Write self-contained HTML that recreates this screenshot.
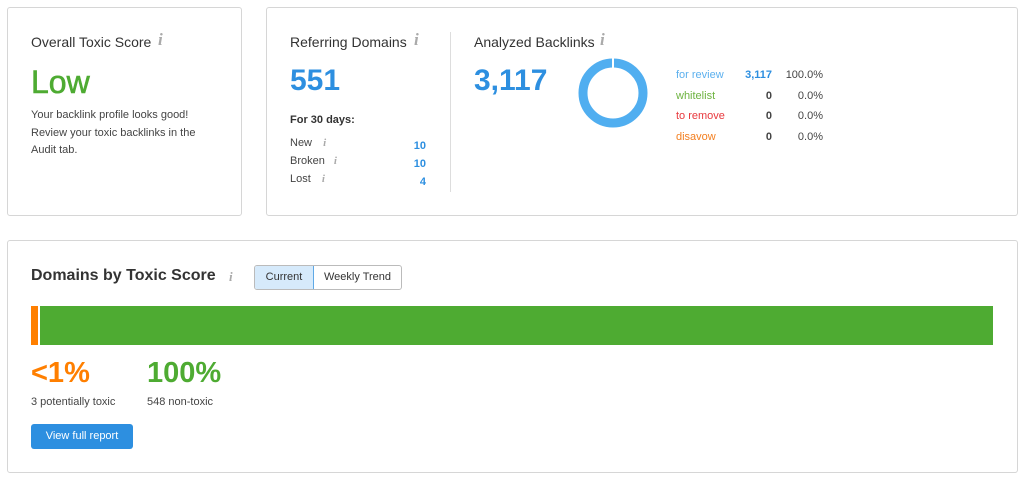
<!DOCTYPE html>
<html><head><meta charset="utf-8"><style>
*{margin:0;padding:0;box-sizing:border-box}
body{width:1024px;height:480px;background:#fff;font-family:"Liberation Sans",sans-serif;color:#333;position:relative;overflow:hidden}
.card{position:absolute;border:1px solid #d6d6d6;border-radius:3px;background:#fff}
.a{position:absolute;white-space:nowrap}
.i{font-family:"Liberation Serif",serif;font-style:italic;color:#aaa;font-weight:bold}
.t{font-size:14px;color:#333}
.s{font-size:11px;color:#444}
</style></head><body>
<div class="card" style="left:7px;top:7px;width:235px;height:209px"></div>
<div class="card" style="left:266px;top:7px;width:752px;height:209px"></div>
<div class="card" style="left:7px;top:240px;width:1011px;height:233px"></div>

<div class="a t" style="left:31px;top:34px">Overall Toxic Score</div>
<div class="a i" style="left:158px;top:30px;font-size:17px">i</div>
<div class="a" style="left:31px;top:64px;font-size:32px;color:#4eab32;-webkit-text-stroke:0.6px #4eab32">Low</div>
<div class="a s" style="left:31px;top:107px;line-height:17.5px;white-space:normal;width:185px">Your backlink profile looks good! Review your toxic backlinks in the Audit tab.</div>

<div class="a t" style="left:290px;top:34px">Referring Domains</div>
<div class="a i" style="left:414px;top:30px;font-size:17px">i</div>
<div class="a" style="left:290px;top:64px;font-size:30px;font-weight:bold;color:#2d8fe0">551</div>
<div class="a" style="left:290px;top:114px;font-size:11px;font-weight:bold;color:#333">For 30 days:</div>
<div class="a s" style="left:290px;top:137px">New <span class="i" style="font-size:11px;margin-left:8px">i</span></div>
<div class="a s" style="left:290px;top:155px">Broken <span class="i" style="font-size:11px;margin-left:6px">i</span></div>
<div class="a s" style="left:290px;top:173px">Lost <span class="i" style="font-size:11px;margin-left:8px">i</span></div>
<div class="a" style="left:400px;width:26px;text-align:right;top:140px;font-size:11px;font-weight:bold;color:#2d8fe0">10</div>
<div class="a" style="left:400px;width:26px;text-align:right;top:158px;font-size:11px;font-weight:bold;color:#2d8fe0">10</div>
<div class="a" style="left:400px;width:26px;text-align:right;top:176px;font-size:11px;font-weight:bold;color:#2d8fe0">4</div>
<div class="a" style="left:450px;top:32px;width:1px;height:160px;background:#ddd"></div>

<div class="a t" style="left:474px;top:34px">Analyzed Backlinks</div>
<div class="a i" style="left:600px;top:30px;font-size:17px">i</div>
<div class="a" style="left:474px;top:64px;font-size:30px;font-weight:bold;color:#2d8fe0">3,117</div>
<svg class="a" style="left:577px;top:57px" width="72" height="72"><circle cx="36" cy="36" r="30" fill="none" stroke="#50aef0" stroke-width="9"/><rect x="35" y="0" width="2" height="12" fill="#fff"/></svg>
<div class="a" style="left:676px;top:65px;font-size:11px;line-height:20.5px">
<div style="color:#5cb0ee">for review</div><div style="color:#6db33f">whitelist</div><div style="color:#e8383d">to remove</div><div style="color:#f37f20">disavow</div></div>
<div class="a" style="left:730px;width:42px;text-align:right;top:65px;font-size:11px;line-height:20.5px;font-weight:bold;color:#444"><div style="color:#2d8fe0">3,117</div><div>0</div><div>0</div><div>0</div></div>
<div class="a" style="left:780px;width:43px;text-align:right;top:65px;font-size:11px;line-height:20.5px;color:#444"><div>100.0%</div><div>0.0%</div><div>0.0%</div><div>0.0%</div></div>

<div class="a" style="left:31px;top:267px;font-size:16px;font-weight:bold;color:#333">Domains by Toxic Score</div>
<div class="a i" style="left:229px;top:269px;font-size:13px">i</div>
<div class="a" style="left:254px;top:265px;width:148px;height:25px;border:1px solid #bbb;border-radius:3px;font-size:11px;overflow:hidden;display:flex">
<div style="width:59px;background:#d6eafb;border-right:1px solid #5fa9e6;text-align:center;line-height:23px;color:#333">Current</div>
<div style="flex:1;text-align:center;line-height:23px;color:#333">Weekly Trend</div></div>
<div class="a" style="left:31px;top:306px;width:7px;height:39px;background:#ff7f00"></div>
<div class="a" style="left:40px;top:306px;width:953px;height:39px;background:#4eab32"></div>
<div class="a" style="left:31px;top:357px;font-size:29px;font-weight:bold;color:#ff7f00">&lt;1%</div>
<div class="a" style="left:147px;top:357px;font-size:29px;font-weight:bold;color:#4eab32">100%</div>
<div class="a s" style="left:31px;top:396px">3 potentially toxic</div>
<div class="a s" style="left:147px;top:396px">548 non-toxic</div>
<div class="a" style="left:31px;top:424px;width:102px;height:25px;background:#2d8fe0;border-radius:3px;color:#fff;font-size:11px;line-height:25px;text-align:center">View full report</div>
</body></html>
